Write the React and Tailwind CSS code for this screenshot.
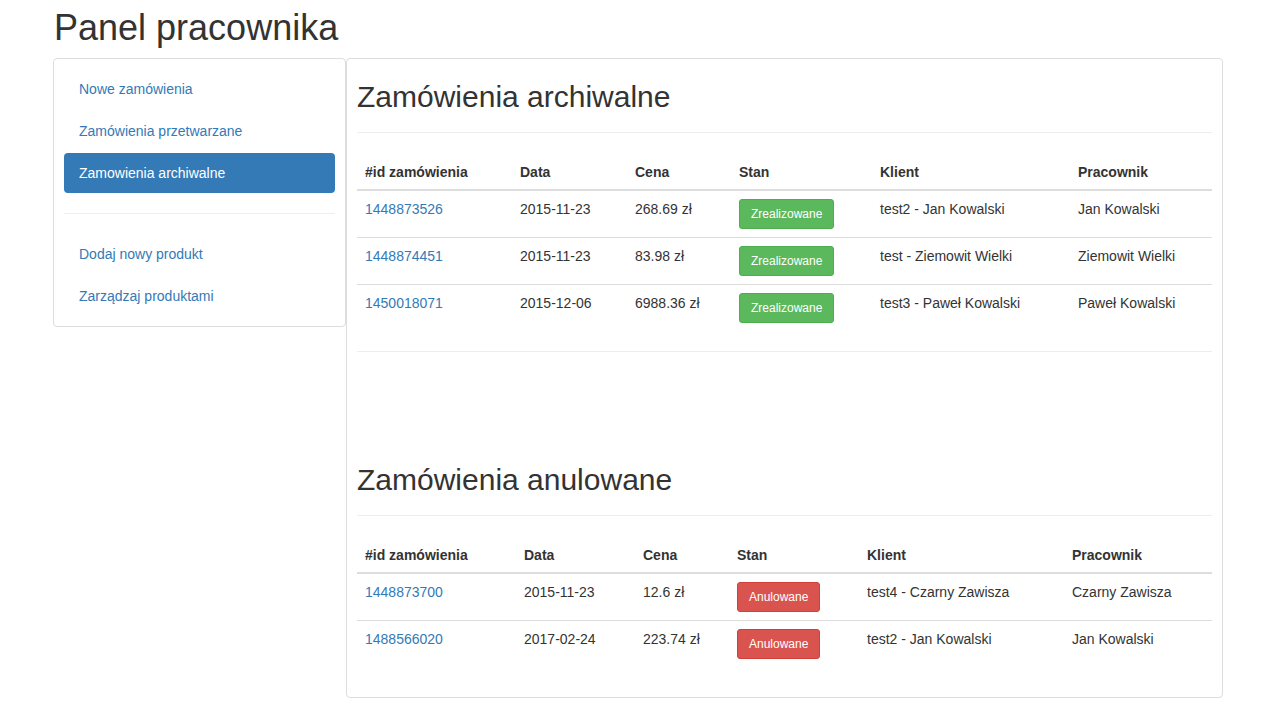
const archived = [
  { id: "1448873526", date: "2015-11-23", price: "268.69 zł", client: "test2 - Jan Kowalski", worker: "Jan Kowalski" },
  { id: "1448874451", date: "2015-11-23", price: "83.98 zł", client: "test - Ziemowit Wielki", worker: "Ziemowit Wielki" },
  { id: "1450018071", date: "2015-12-06", price: "6988.36 zł", client: "test3 - Paweł Kowalski", worker: "Paweł Kowalski" },
];

const cancelled = [
  { id: "1448873700", date: "2015-11-23", price: "12.6 zł", client: "test4 - Czarny Zawisza", worker: "Czarny Zawisza" },
  { id: "1488566020", date: "2017-02-24", price: "223.74 zł", client: "test2 - Jan Kowalski", worker: "Jan Kowalski" },
];

const OrdersTable = ({ rows, widths, status, statusClass }) => (
  <table className="w-full table-fixed border-collapse text-[14px] leading-5 text-[#333]">
    <colgroup>
      {widths.map((w, i) => (
        <col key={i} style={{ width: w }} />
      ))}
    </colgroup>
    <thead>
      <tr className="border-b-2 border-[#ddd] text-left">
        <th className="px-2 pt-[9px] pb-[7px] font-bold">#id zamówienia</th>
        <th className="px-2 pt-[9px] pb-[7px] font-bold">Data</th>
        <th className="px-2 pt-[9px] pb-[7px] font-bold">Cena</th>
        <th className="px-2 pt-[9px] pb-[7px] font-bold">Stan</th>
        <th className="px-2 pt-[9px] pb-[7px] font-bold">Klient</th>
        <th className="px-2 pt-[9px] pb-[7px] font-bold">Pracownik</th>
      </tr>
    </thead>
    <tbody>
      {rows.map((row) => (
        <tr key={row.id} className="border-t border-[#ddd] align-top">
          <td className="p-2">
            <a href="#" className="text-[#337ab7]">{row.id}</a>
          </td>
          <td className="p-2">{row.date}</td>
          <td className="p-2">{row.price}</td>
          <td className="p-2">
            <button className={`rounded-[3px] border px-[11px] py-[5px] text-[12px] leading-[18px] text-white ${statusClass}`}>
              {status}
            </button>
          </td>
          <td className="p-2">{row.client}</td>
          <td className="p-2">{row.worker}</td>
        </tr>
      ))}
    </tbody>
  </table>
);

const PageHeader = ({ children }) => (
  <div className="mb-5 border-b border-[#eee] pb-[9px]">
    <h2 className="mb-[10px] text-[30px] leading-[33px] font-medium text-[#333]">{children}</h2>
  </div>
);

const App = () => {
  const pill = "block rounded px-[15px] py-[10px] leading-5 text-[#337ab7]";

  return (
    <div className="min-h-[710px] bg-white font-['Liberation_Sans',Arial,sans-serif] text-[14px] text-[#333]">
      <div className="ml-[53px] w-[1170px] pt-[8px]">
        <h1 className="mb-[10px] pl-[1px] text-[36px] leading-[40px] font-medium">Panel pracownika</h1>
        <div className="flex items-start">
          {/* SIDEBAR */}
          <div className="w-[293px] rounded border border-[#ddd] p-[10px]">
            <ul className="flex flex-col gap-[2px]">
              <li><a href="#" className={pill}>Nowe zamówienia</a></li>
              <li><a href="#" className={pill}>Zamówienia przetwarzane</a></li>
              <li><a href="#" className={`${pill} bg-[#337ab7] !text-white`}>Zamowienia archiwalne</a></li>
            </ul>
            <div className="my-5 border-t border-[#eee]" />
            <ul className="flex flex-col gap-[2px]">
              <li><a href="#" className={pill}>Dodaj nowy produkt</a></li>
              <li><a href="#" className={pill}>Zarządzaj produktami</a></li>
            </ul>
          </div>
          {/* MAIN */}
          <div className="w-[877px] rounded border border-[#ddd] px-[10px] pt-[21px] pb-[10px]">
            <PageHeader>Zamówienia archiwalne</PageHeader>
            <OrdersTable
              rows={archived}
              widths={[155, 115, 104, 141, 198, 142]}
              status="Zrealizowane"
              statusClass="bg-[#5cb85c] border-[#4cae4c]"
            />
            <div className="mt-5 mb-[111px] border-t border-[#eee]" />
            <PageHeader>Zamówienia anulowane</PageHeader>
            <div className="mb-5">
              <OrdersTable
                rows={cancelled}
                widths={[159, 119, 94, 130, 205, 148]}
                status="Anulowane"
                statusClass="bg-[#d9534f] border-[#d43f3a]"
              />
            </div>
          </div>
        </div>
      </div>
    </div>
  );
};

export default App;
